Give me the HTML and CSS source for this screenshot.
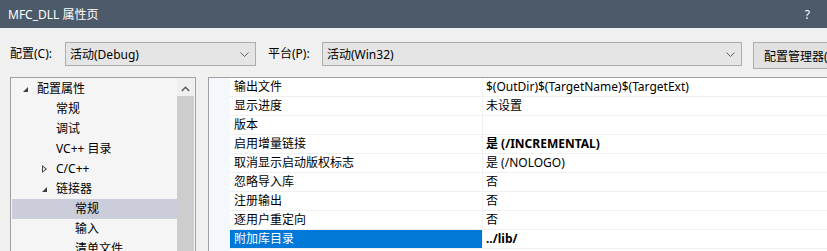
FILE: index.html
```html
<!DOCTYPE html>
<html lang="zh-CN">
<head>
  <meta charset="UTF-8">
  <title>MFC_DLL 属性页</title>
  <link rel="stylesheet" href="styles.css">
</head>
<body>
  <div class="titlebar">
    <span>MFC_DLL 属性页</span>
    <span class="help">?</span>
  </div>

  <div class="toolbar">
    <label class="lbl">配置(C):</label>
    <div class="combo combo-config">
      <span>活动(Debug)</span>
      <svg class="chev" width="9" height="5" viewBox="0 0 9 5"><path d="M0.5 0.5 L4.5 4.5 L8.5 0.5" fill="none" stroke="#606060"/></svg>
    </div>
    <label class="lbl lbl-platform">平台(P):</label>
    <div class="combo combo-platform">
      <span>活动(Win32)</span>
      <svg class="chev" width="9" height="5" viewBox="0 0 9 5"><path d="M0.5 0.5 L4.5 4.5 L8.5 0.5" fill="none" stroke="#606060"/></svg>
    </div>
    <button class="btn">配置管理器(O)...</button>
  </div>

  <div class="panels">
    <div class="tree">
      <ul class="tree-list">
        <li class="lv0"><span class="tri open"></span>配置属性</li>
        <li class="lv1">常规</li>
        <li class="lv1">调试</li>
        <li class="lv1">VC++ 目录</li>
        <li class="lv1"><span class="tri closed"></span>C/C++</li>
        <li class="lv1"><span class="tri open"></span>链接器</li>
        <li class="lv2 sel">常规</li>
        <li class="lv2">输入</li>
        <li class="lv2">清单文件</li>
      </ul>
      <div class="scroll">
        <svg class="up" width="9" height="6" viewBox="0 0 9 6"><path d="M0.8 5 L4.5 1.3 L8.2 5" fill="none" stroke="#606060" stroke-width="1.6"/></svg>
        <div class="thumb"></div>
      </div>
    </div>

    <div class="grid">
      <div class="gutter"></div>
      <div class="rows">
        <div class="row"><div class="name">输出文件</div><div class="val">$(OutDir)$(TargetName)$(TargetExt)</div></div>
        <div class="row"><div class="name">显示进度</div><div class="val">未设置</div></div>
        <div class="row"><div class="name">版本</div><div class="val"></div></div>
        <div class="row"><div class="name">启用增量链接</div><div class="val bold">是 (/INCREMENTAL)</div></div>
        <div class="row"><div class="name">取消显示启动版权标志</div><div class="val">是 (/NOLOGO)</div></div>
        <div class="row"><div class="name">忽略导入库</div><div class="val">否</div></div>
        <div class="row"><div class="name">注册输出</div><div class="val">否</div></div>
        <div class="row"><div class="name">逐用户重定向</div><div class="val">否</div></div>
        <div class="row active"><div class="name">附加库目录</div><div class="val bold">../lib/</div></div>
      </div>
    </div>
  </div>
</body>
</html>
```

FILE: styles.css
```css
* {
  box-sizing: border-box;
}
body {
  margin: 0;
  width: 827px;
  height: 251px;
  overflow: hidden;
  background: #f0f0f0;
  font-family: "Noto Sans", "Noto Sans CJK SC", sans-serif;
  font-size: 12px;
  color: #000;
}
.titlebar {
  height: 28px;
  background: #4d5a69;
  color: #fff;
  display: flex;
  align-items: center;
  justify-content: space-between;
  padding: 0 17px 0 8px;
  font-size: 12px;
}
.help {
  font-size: 12px;
}
.toolbar {
  display: flex;
  align-items: flex-start;
  margin-top: 14px;
  padding-left: 10px;
  height: 27px;
}
.toolbar > * {
  flex-shrink: 0;
}
.lbl {
  line-height: 24px;
  width: 55px;
}
.lbl-platform {
  margin-left: 12px;
  width: 54px;
}
.combo {
  height: 24px;
  border: 1px solid #adadad;
  background: #e5e5e5;
  display: flex;
  align-items: center;
  justify-content: space-between;
  padding: 0 6px 0 4px;
}
.combo-config {
  width: 191px;
}
.combo-platform {
  width: 420px;
}
.btn {
  margin-left: 11px;
  height: 27px;
  width: 100px;
  border: 1px solid #adadad;
  background: #e1e1e1;
  font: inherit;
  text-align: left;
  padding: 0 0 0 10px;
  white-space: nowrap;
  overflow: hidden;
}
.panels {
  display: flex;
  gap: 12px;
  margin-top: 8px;
  padding-left: 10px;
  height: 174px;
  overflow: hidden;
}
.tree {
  flex-shrink: 0;
  width: 186px;
  height: 200px;
  border: 1px solid #a0a0a0;
  background: #f5f5f5;
  display: flex;
}
.tree-list {
  list-style: none;
  margin: 0;
  padding: 1px 0 0 1px;
  flex: 1;
}
.tree-list li {
  height: 20px;
  line-height: 20px;
  position: relative;
  white-space: nowrap;
}
.lv0 { padding-left: 25px; }
.lv1 { padding-left: 44px; }
.lv2 { padding-left: 63px; }
.sel {
  background: #cbcddb;
}
.tri {
  position: absolute;
  top: 7px;
  width: 0;
  height: 0;
}
.lv0 .tri { left: 11px; }
.lv1 .tri { left: 30px; }
.tri.open {
  border-left: 5px solid transparent;
  border-bottom: 5px solid #404040;
  top: 8px;
}
.tri.closed {
  width: 5px;
  height: 8px;
  top: 6px;
  background: #404040;
  clip-path: polygon(0 0, 100% 50%, 0 100%, 0 0, 1px 1.8px, 1px 6.2px, 3.4px 4px, 1px 1.8px);
}
.scroll {
  width: 17px;
  background: #f0f0f0;
  display: flex;
  flex-direction: column;
  align-items: center;
  margin-right: 1px;
}
.up {
  margin-top: 8px;
}
.thumb {
  margin-top: 4px;
  width: 17px;
  flex: 1;
  background: #cdcdcd;
}
.grid {
  flex: 1;
  height: 200px;
  border-top: 1px solid #a0a0a0;
  border-left: 1px solid #a0a0a0;
  background: #fff;
  display: flex;
}
.gutter {
  width: 21px;
  background: #f5f8fd;
}
.rows {
  flex: 1;
}
.row {
  display: flex;
  height: 19px;
  border-bottom: 1px solid #f0f0f0;
}
.name {
  width: 253px;
  padding-left: 4px;
  line-height: 18px;
  border-right: 1px solid #f0f0f0;
  white-space: nowrap;
}
.val {
  padding-left: 3px;
  line-height: 18px;
  white-space: nowrap;
}
.bold {
  font-weight: bold;
}
.row.active .name {
  background: #0078d7;
  color: #fff;
}
```
